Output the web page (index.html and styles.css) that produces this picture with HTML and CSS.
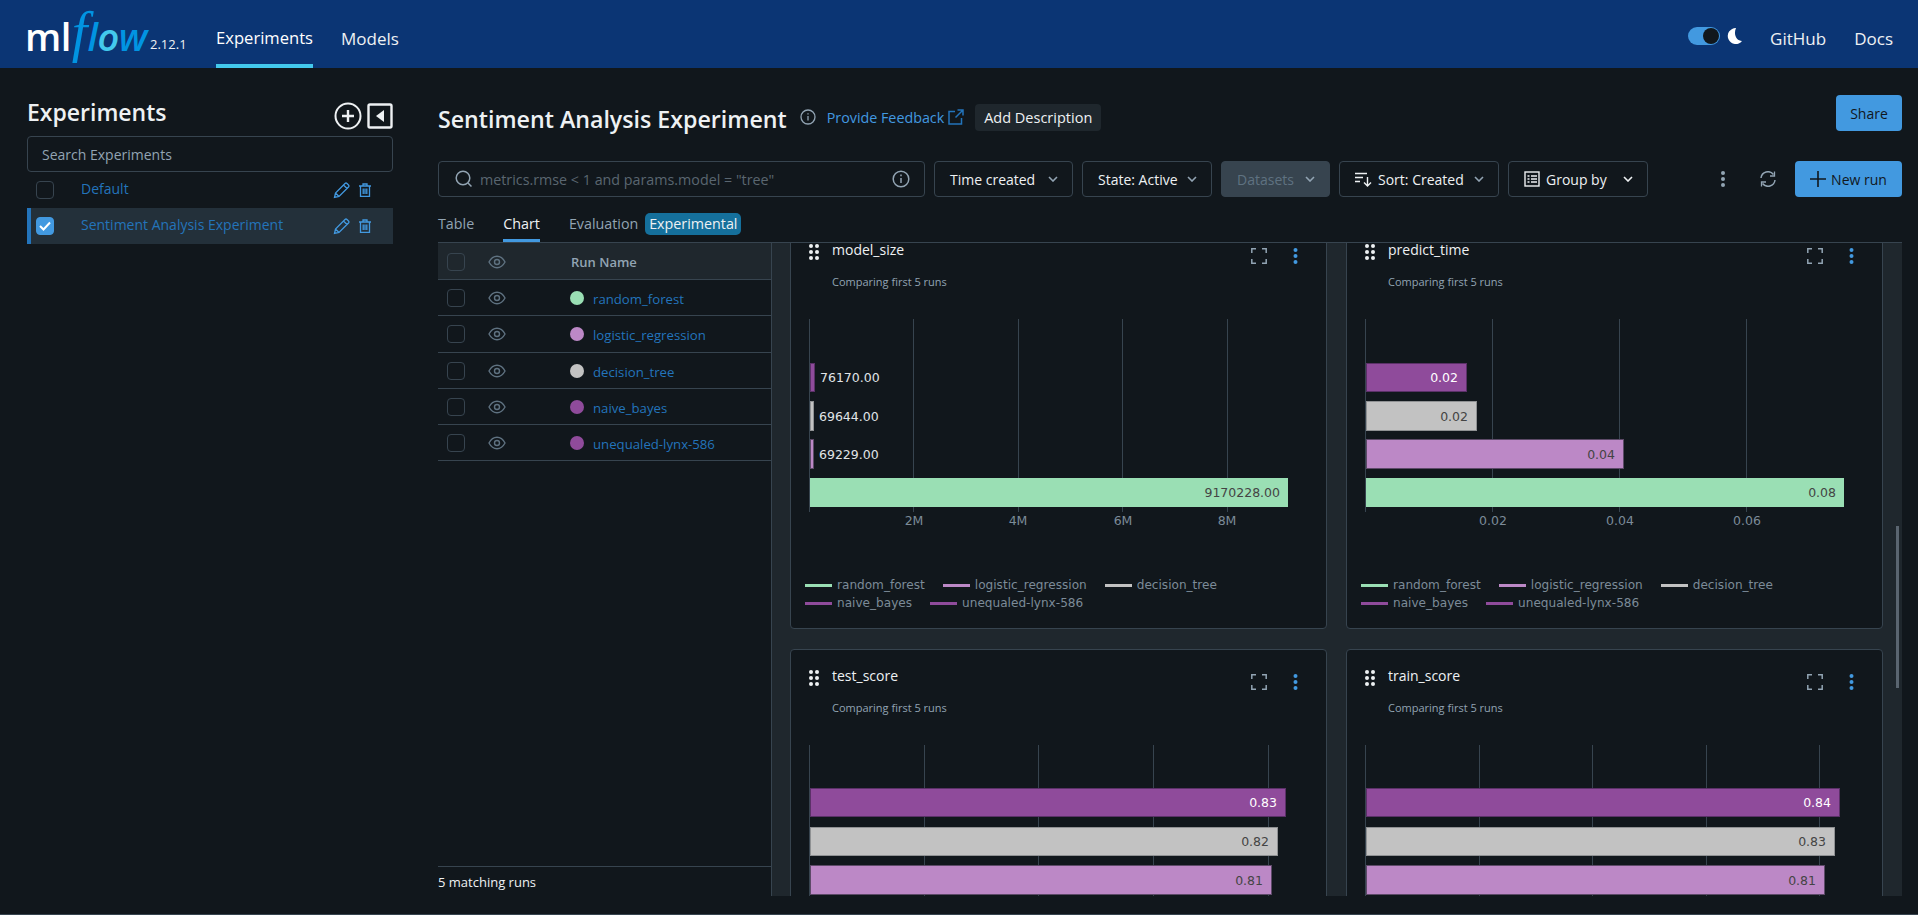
FILE: index.html
```html
<!DOCTYPE html>
<html lang="en">
  <head>
    <meta charset="UTF-8" />
    <title>MLflow Experiments</title>
    <link rel="stylesheet" href="styles.css">
  </head>
  <body>
    <header class="topbar">
      <div class="logo"><span class="logo-ml">ml</span><span class="logo-f">f</span><span class="logo-low">l<span class="logo-o">o</span>w</span></div>
      <span class="version">2.12.1</span>
      <nav class="nav">
        <a class="nav-link active">Experiments</a>
        <a class="nav-link">Models</a>
      </nav>
      <div class="topbar-right">
        <span class="toggle"><span class="knob"></span></span>
        <svg class="moon" width="16" height="18" viewBox="0 0 16 18"><path d="M9 1A8 8 0 1 0 15 14C10 14 6 8 9 1z" fill="#fff"/></svg>
        <a class="nav-link github">GitHub</a>
        <a class="nav-link">Docs</a>
      </div>
    </header>

    <div class="content">
      <aside class="sidebar">
        <div class="side-head">
          <h2>Experiments</h2>
          <svg class="side-add" width="28" height="28" viewBox="0 0 28 28" fill="none" stroke="#eef1f3" stroke-width="2"><circle cx="14" cy="14" r="12.5"/><path d="M14 8v12M8 14h12" stroke-width="2.4"/></svg>
          <svg class="side-collapse" width="26" height="26" viewBox="0 0 26 26"><rect x="1.5" y="1.5" width="23" height="23" rx="1.5" fill="none" stroke="#eef1f3" stroke-width="2.4"/><path d="M17 7v12l-8-6z" fill="#eef1f3"/></svg>
        </div>
        <div class="side-search">Search Experiments</div>
        <div class="side-row">
          <span class="check"></span>
          <a class="side-name">Default</a>
          <svg class="pencil" width="17" height="17" viewBox="0 0 17 17" fill="none" stroke="#4299e0" stroke-width="1.3"><path d="M1.5 15.5l1-4.5L12 1.5a1.5 1.5 0 0 1 2 0l1.5 1.500a1.500 1.500 0 0 1 0 2L6 14.500zM2.500 11l3.500 3.500M10.500 3l3.500 3.500"/></svg>
          <svg class="trash" width="12" height="14" viewBox="0 0 12 14" fill="none" stroke="#4299e0" stroke-width="1.300"><path d="M0 3h12M4 3V1h4v2M1.500 3v10.300h9V3M4.200 5.500v5.500M6 5.500v5.500M7.800 5.500v5.500"/></svg>
        </div>
        <div class="side-row selected">
          <span class="check on"><svg width="12" height="10" viewBox="0 0 12 10" fill="none" stroke="#fff" stroke-width="2"><path d="M1 5l3.500 3.500L11 1.500"/></svg></span>
          <a class="side-name">Sentiment Analysis Experiment</a>
          <svg class="pencil" width="17" height="17" viewBox="0 0 17 17" fill="none" stroke="#4299e0" stroke-width="1.3"><path d="M1.5 15.5l1-4.5L12 1.5a1.5 1.5 0 0 1 2 0l1.5 1.500a1.500 1.500 0 0 1 0 2L6 14.500zM2.500 11l3.500 3.500M10.500 3l3.500 3.500"/></svg>
          <svg class="trash" width="12" height="14" viewBox="0 0 12 14" fill="none" stroke="#4299e0" stroke-width="1.300"><path d="M0 3h12M4 3V1h4v2M1.500 3v10.300h9V3M4.200 5.500v5.500M6 5.500v5.500M7.800 5.500v5.500"/></svg>
        </div>
      </aside>

      <main class="main">
        <div class="title-row">
          <h1>Sentiment Analysis Experiment</h1>
          <svg class="title-info" width="16" height="16" viewBox="0 0 16 16" fill="none" stroke="#92a4b3" stroke-width="1.300"><circle cx="8" cy="8" r="7"/><path d="M8 7v4.500M8 4.200v1.300"/></svg>
          <a class="feedback">Provide Feedback</a>
          <svg class="ext" width="16" height="16" viewBox="0 0 16 16" fill="none" stroke="#2374bb" stroke-width="1.500"><path d="M7 2.500H1v12.500h12.500V9M9.500 1H15v5.500M15 1L7.500 8.500"/></svg>
          <button class="btn-desc">Add Description</button>
          <button class="btn-share">Share</button>
        </div>

        <div class="filters">
          <div class="search-box">
            <svg width="18" height="18" viewBox="0 0 18 18" fill="none" stroke="#92a4b3" stroke-width="1.500"><circle cx="8" cy="8" r="6.800"/><path d="M13 13l3.500 3.500"/></svg>
            <span class="placeholder">metrics.rmse &lt; 1 and params.model = "tree"</span>
            <svg class="search-info" width="18" height="18" viewBox="0 0 18 18" fill="none" stroke="#92a4b3" stroke-width="1.500"><circle cx="9" cy="9" r="7.800"/><path d="M9 8v5M9 4.600v1.600"/></svg>
          </div>
          <button class="select w-time">Time created<svg class="chev" width="10" height="6" viewBox="0 0 10 6" fill="none" stroke="#92a4b3" stroke-width="1.600"><path d="M1 1l4 4 4-4"/></svg></button>
          <button class="select w-state">State: Active<svg class="chev" width="10" height="6" viewBox="0 0 10 6" fill="none" stroke="#92a4b3" stroke-width="1.600"><path d="M1 1l4 4 4-4"/></svg></button>
          <button class="select w-data disabled">Datasets<svg class="chev" width="10" height="6" viewBox="0 0 10 6" fill="none" stroke="#92a4b3" stroke-width="1.600"><path d="M1 1l4 4 4-4"/></svg></button>
          <button class="select w-sort"><svg class="lead" width="17" height="15" viewBox="0 0 17 15" fill="none" stroke="#eef1f3" stroke-width="1.400"><path d="M0 1.500h12M0 5.500h8M0 9.500h5M12.500 5v9M9 10.500l3.500 3.500 3.500-3.500"/></svg>Sort: Created<svg class="chev" width="10" height="6" viewBox="0 0 10 6" fill="none" stroke="#92a4b3" stroke-width="1.600"><path d="M1 1l4 4 4-4"/></svg></button>
          <button class="select w-group"><svg class="lead" width="16" height="16" viewBox="0 0 16 16" fill="none" stroke="#eef1f3" stroke-width="1.400"><rect x="1" y="1" width="14" height="14"/><path d="M3.500 5h2M7 5h6M3.500 8h2M7 8h6M3.500 11h2M7 11h6"/></svg>Group by<svg class="chev" width="10" height="6" viewBox="0 0 10 6" fill="none" stroke="#eef1f3" stroke-width="1.600"><path d="M1 1l4 4 4-4"/></svg></button>
          <svg class="more" width="6" height="16" viewBox="0 0 6 16" fill="#92a4b3"><circle cx="3" cy="2" r="2"/><circle cx="3" cy="8" r="2"/><circle cx="3" cy="14" r="2"/></svg>
          <svg class="refresh" width="16" height="16" viewBox="0 0 16 16" fill="none" stroke="#92a4b3" stroke-width="1.500"><path d="M1 7a7 7 0 0 1 12.500-3.500M15 9a7 7 0 0 1-12.500 3.500"/><path d="M14.500 0.500V5H10M1.500 15.500V11H6" stroke-width="1.300"/></svg>
          <button class="btn-new"><svg width="16" height="16" viewBox="0 0 16 16" fill="none" stroke="#11171c" stroke-width="1.600"><path d="M8 0v16M0 8h16"/></svg>New run</button>
        </div>

        <div class="tabs">
          <a class="tab">Table</a>
          <a class="tab active">Chart</a>
          <a class="tab">Evaluation</a>
          <span class="badge">Experimental</span>
        </div>

        <div class="workspace">
          <section class="runs">
            <div class="run-row run-head">
              <span class="check dim"></span>
              <svg class="eye" width="18" height="14" viewBox="0 0 18 14" fill="none" stroke="#5f7281" stroke-width="1.400"><path d="M1 7c2-3.800 4.800-5.700 8-5.700S15 3.200 17 7c-2 3.800-4.800 5.700-8 5.700S3 10.800 1 7z"/><circle cx="9" cy="7" r="2.500"/></svg>
              <span class="run-title">Run Name</span>
            </div>
            <div class="run-row">
              <span class="check dim"></span>
              <svg class="eye" width="18" height="14" viewBox="0 0 18 14" fill="none" stroke="#5f7281" stroke-width="1.400"><path d="M1 7c2-3.800 4.800-5.700 8-5.700S15 3.200 17 7c-2 3.800-4.800 5.700-8 5.700S3 10.800 1 7z"/><circle cx="9" cy="7" r="2.500"/></svg>
              <span class="dot green"></span><a class="run-name">random_forest</a>
            </div>
            <div class="run-row">
              <span class="check dim"></span>
              <svg class="eye" width="18" height="14" viewBox="0 0 18 14" fill="none" stroke="#5f7281" stroke-width="1.400"><path d="M1 7c2-3.800 4.800-5.700 8-5.700S15 3.200 17 7c-2 3.800-4.800 5.700-8 5.700S3 10.800 1 7z"/><circle cx="9" cy="7" r="2.500"/></svg>
              <span class="dot violet"></span><a class="run-name">logistic_regression</a>
            </div>
            <div class="run-row">
              <span class="check dim"></span>
              <svg class="eye" width="18" height="14" viewBox="0 0 18 14" fill="none" stroke="#5f7281" stroke-width="1.400"><path d="M1 7c2-3.800 4.800-5.700 8-5.700S15 3.200 17 7c-2 3.800-4.800 5.700-8 5.700S3 10.800 1 7z"/><circle cx="9" cy="7" r="2.500"/></svg>
              <span class="dot grey"></span><a class="run-name">decision_tree</a>
            </div>
            <div class="run-row">
              <span class="check dim"></span>
              <svg class="eye" width="18" height="14" viewBox="0 0 18 14" fill="none" stroke="#5f7281" stroke-width="1.400"><path d="M1 7c2-3.800 4.800-5.700 8-5.700S15 3.200 17 7c-2 3.800-4.800 5.700-8 5.700S3 10.800 1 7z"/><circle cx="9" cy="7" r="2.500"/></svg>
              <span class="dot purple"></span><a class="run-name">naive_bayes</a>
            </div>
            <div class="run-row">
              <span class="check dim"></span>
              <svg class="eye" width="18" height="14" viewBox="0 0 18 14" fill="none" stroke="#5f7281" stroke-width="1.400"><path d="M1 7c2-3.800 4.800-5.700 8-5.700S15 3.200 17 7c-2 3.800-4.800 5.700-8 5.700S3 10.800 1 7z"/><circle cx="9" cy="7" r="2.500"/></svg>
              <span class="dot purple"></span><a class="run-name">unequaled-lynx-586</a>
            </div>
            <div class="runs-foot">5 matching runs</div>
          </section>

          <section class="charts">
            <div class="chart-grid">

              <article class="card">
                <div class="card-head">
                  <svg class="grip" width="10" height="16" viewBox="0 0 10 16" fill="#eef1f3"><circle cx="2" cy="2" r="2"/><circle cx="8" cy="2" r="2"/><circle cx="2" cy="8" r="2"/><circle cx="8" cy="8" r="2"/><circle cx="2" cy="14" r="2"/><circle cx="8" cy="14" r="2"/></svg>
                  <h3>model_size</h3>
                  <svg class="fullscreen" width="16" height="16" viewBox="0 0 16 16" fill="none" stroke="#92a4b3" stroke-width="1.500"><path d="M5 .8H.8V5M11 .8h4.200V5M5 15.200H.8V11M11 15.200h4.200V11"/></svg>
                  <svg class="kebab" width="5" height="16" viewBox="0 0 5 16" fill="#4299e0"><circle cx="2.500" cy="2" r="2"/><circle cx="2.500" cy="8" r="2"/><circle cx="2.500" cy="14" r="2"/></svg>
                </div>
                <p class="card-sub">Comparing first 5 runs</p>
                <svg class="plot" width="535" height="212" viewBox="1 0 535 212">
                  <path class="gridline" d="M19.500 0v193M123.500 0v193M228.500 0v193M332.500 0v193M437.500 0v193"/>
                  <rect class="bar purple-bar" x="20.500" y="44.500" width="4" height="28"/>
                  <rect class="bar grey-bar" x="20.500" y="82.500" width="3" height="29"/>
                  <rect class="bar violet-bar" x="20.500" y="120.500" width="3" height="29"/>
                  <rect class="bar green-bar" x="20" y="159" width="478" height="29"/>
                  <text class="bar-out" x="30" y="63">76170.00</text>
                  <text class="bar-out" x="29" y="102">69644.00</text>
                  <text class="bar-out" x="29" y="140">69229.00</text>
                  <text class="bar-in" x="490" y="178">9170228.00</text>
                  <text class="tick" x="124" y="206">2M</text>
                  <text class="tick" x="228" y="206">4M</text>
                  <text class="tick" x="333" y="206">6M</text>
                  <text class="tick" x="437" y="206">8M</text>
                </svg>
                <div class="legend">
                  <span class="key"><i class="swatch green"></i>random_forest</span>
                  <span class="key"><i class="swatch violet"></i>logistic_regression</span>
                  <span class="key"><i class="swatch grey"></i>decision_tree</span>
                  <span class="key"><i class="swatch purple"></i>naive_bayes</span>
                  <span class="key"><i class="swatch purple"></i>unequaled-lynx-586</span>
                </div>
              </article>

              <article class="card">
                <div class="card-head">
                  <svg class="grip" width="10" height="16" viewBox="0 0 10 16" fill="#eef1f3"><circle cx="2" cy="2" r="2"/><circle cx="8" cy="2" r="2"/><circle cx="2" cy="8" r="2"/><circle cx="8" cy="8" r="2"/><circle cx="2" cy="14" r="2"/><circle cx="8" cy="14" r="2"/></svg>
                  <h3>predict_time</h3>
                  <svg class="fullscreen" width="16" height="16" viewBox="0 0 16 16" fill="none" stroke="#92a4b3" stroke-width="1.500"><path d="M5 .8H.8V5M11 .8h4.200V5M5 15.200H.8V11M11 15.200h4.200V11"/></svg>
                  <svg class="kebab" width="5" height="16" viewBox="0 0 5 16" fill="#4299e0"><circle cx="2.500" cy="2" r="2"/><circle cx="2.500" cy="8" r="2"/><circle cx="2.500" cy="14" r="2"/></svg>
                </div>
                <p class="card-sub">Comparing first 5 runs</p>
                <svg class="plot" width="535" height="212" viewBox="1 0 535 212">
                  <path class="gridline" d="M19.500 0v193M146.500 0v193M273.500 0v193M400.500 0v193"/>
                  <rect class="bar purple-bar" x="20.500" y="44.500" width="100" height="28"/>
                  <rect class="bar grey-bar" x="20.500" y="82.500" width="110" height="29"/>
                  <rect class="bar violet-bar" x="20.500" y="120.500" width="257" height="29"/>
                  <rect class="bar green-bar" x="20" y="159" width="478" height="29"/>
                  <text class="bar-in light" x="112" y="63">0.02</text>
                  <text class="bar-in" x="122" y="102">0.02</text>
                  <text class="bar-in" x="269" y="140">0.04</text>
                  <text class="bar-in" x="490" y="178">0.08</text>
                  <text class="tick" x="147" y="206">0.02</text>
                  <text class="tick" x="274" y="206">0.04</text>
                  <text class="tick" x="401" y="206">0.06</text>
                </svg>
                <div class="legend">
                  <span class="key"><i class="swatch green"></i>random_forest</span>
                  <span class="key"><i class="swatch violet"></i>logistic_regression</span>
                  <span class="key"><i class="swatch grey"></i>decision_tree</span>
                  <span class="key"><i class="swatch purple"></i>naive_bayes</span>
                  <span class="key"><i class="swatch purple"></i>unequaled-lynx-586</span>
                </div>
              </article>

              <article class="card">
                <div class="card-head">
                  <svg class="grip" width="10" height="16" viewBox="0 0 10 16" fill="#eef1f3"><circle cx="2" cy="2" r="2"/><circle cx="8" cy="2" r="2"/><circle cx="2" cy="8" r="2"/><circle cx="8" cy="8" r="2"/><circle cx="2" cy="14" r="2"/><circle cx="8" cy="14" r="2"/></svg>
                  <h3>test_score</h3>
                  <svg class="fullscreen" width="16" height="16" viewBox="0 0 16 16" fill="none" stroke="#92a4b3" stroke-width="1.500"><path d="M5 .8H.8V5M11 .8h4.200V5M5 15.200H.8V11M11 15.200h4.200V11"/></svg>
                  <svg class="kebab" width="5" height="16" viewBox="0 0 5 16" fill="#4299e0"><circle cx="2.500" cy="2" r="2"/><circle cx="2.500" cy="8" r="2"/><circle cx="2.500" cy="14" r="2"/></svg>
                </div>
                <p class="card-sub">Comparing first 5 runs</p>
                <svg class="plot" width="535" height="212" viewBox="1 0 535 212">
                  <path class="gridline" d="M19.500 0v193M134.500 0v193M248.500 0v193M363.500 0v193M478.500 0v193"/>
                  <rect class="bar purple-bar" x="20.500" y="43.500" width="475" height="28"/>
                  <rect class="bar grey-bar" x="20.500" y="82.500" width="467" height="28"/>
                  <rect class="bar violet-bar" x="20.500" y="120.500" width="461" height="29"/>
                  <text class="bar-in light" x="487" y="62">0.83</text>
                  <text class="bar-in" x="479" y="101">0.82</text>
                  <text class="bar-in" x="473" y="140">0.81</text>
                </svg>
              </article>

              <article class="card">
                <div class="card-head">
                  <svg class="grip" width="10" height="16" viewBox="0 0 10 16" fill="#eef1f3"><circle cx="2" cy="2" r="2"/><circle cx="8" cy="2" r="2"/><circle cx="2" cy="8" r="2"/><circle cx="8" cy="8" r="2"/><circle cx="2" cy="14" r="2"/><circle cx="8" cy="14" r="2"/></svg>
                  <h3>train_score</h3>
                  <svg class="fullscreen" width="16" height="16" viewBox="0 0 16 16" fill="none" stroke="#92a4b3" stroke-width="1.500"><path d="M5 .8H.8V5M11 .8h4.200V5M5 15.200H.8V11M11 15.200h4.200V11"/></svg>
                  <svg class="kebab" width="5" height="16" viewBox="0 0 5 16" fill="#4299e0"><circle cx="2.500" cy="2" r="2"/><circle cx="2.500" cy="8" r="2"/><circle cx="2.500" cy="14" r="2"/></svg>
                </div>
                <p class="card-sub">Comparing first 5 runs</p>
                <svg class="plot" width="535" height="212" viewBox="1 0 535 212">
                  <path class="gridline" d="M19.500 0v193M133.500 0v193M246.500 0v193M360.500 0v193M473.500 0v193"/>
                  <rect class="bar purple-bar" x="20.500" y="43.500" width="473" height="28"/>
                  <rect class="bar grey-bar" x="20.500" y="82.500" width="468" height="28"/>
                  <rect class="bar violet-bar" x="20.500" y="120.500" width="458" height="29"/>
                  <text class="bar-in light" x="485" y="62">0.84</text>
                  <text class="bar-in" x="480" y="101">0.83</text>
                  <text class="bar-in" x="470" y="140">0.81</text>
                </svg>
              </article>

            </div>
            <span class="scroll-thumb"></span>
          </section>
        </div>
      </main>
    </div>
  </body>
</html>
```

FILE: styles.css
```css
* {
  box-sizing: border-box;
}

body {
  margin: 0;
  height: 915px;
  overflow: hidden;
  display: flex;
  flex-direction: column;
  background: #11171c;
  color: #eef1f3;
  font-family: "Open Sans", sans-serif;
  font-size: 14px;
  border-bottom: 1px solid #37444f;
}

h1,
h2,
h3,
p {
  margin: 0;
}

button {
  font-family: inherit;
  font-size: 14px;
  cursor: pointer;
}

/* top bar */
.topbar {
  height: 68px;
  flex: none;
  background: #0b3574;
  display: flex;
  align-items: center;
  padding: 0 25px 0 27px;
}

.logo {
  width: 123px;
  height: 50px;
  margin-top: -4px;
  display: flex;
  align-items: baseline;
  line-height: 50px;
  font-size: 38px;
  font-weight: 600;
  white-space: nowrap;
}

.logo-ml {
  margin-left: -2px;
  color: #fff;
  letter-spacing: -0.5px;
}

.logo-f {
  font-family: "Liberation Serif", serif;
  font-style: italic;
  font-size: 56px;
  font-weight: 400;
  color: #0194e2;
  margin: 0 0 0 1px;
}

.logo-low {
  font-style: italic;
  color: #0194e2;
  letter-spacing: -0.5px;
}

.logo-o {
  color: #43c9ed;
}

.version {
  align-self: flex-end;
  margin-bottom: 15px;
  width: 66px;
  font-size: 13px;
  color: #eef1f3;
}

.nav {
  height: 100%;
  display: flex;
  gap: 28px;
}

.nav-link {
  height: 68px;
  display: flex;
  align-items: center;
  padding-top: 8px;
  font-size: 17px;
  color: #eef1f3;
}

.nav-link.active {
  padding-top: 10px;
  font-size: 16.6px;
  border-bottom: 4px solid #43c9ed;
  color: #fff;
}

.topbar-right {
  margin-left: auto;
  display: flex;
  align-items: center;
  gap: 28px;
}

.toggle {
  width: 32px;
  height: 18px;
  margin-top: 4px;
  border-radius: 9px;
  background: #4299e0;
  display: flex;
  justify-content: flex-end;
  padding: 1px;
}

.knob {
  width: 16px;
  height: 16px;
  border-radius: 50%;
  background: #11171c;
}

.moon {
  margin-left: -21px;
  margin-top: 3px;
}

.github {
  margin-left: -1px;
}

/* layout */
.content {
  flex: 1;
  min-height: 0;
  display: flex;
}

/* experiments list */
.sidebar {
  width: 438px;
  flex: none;
  padding: 28px 45px 0 27px;
}

.side-head {
  height: 40px;
  display: flex;
  align-items: center;
  gap: 5px;
}

.side-head h2 {
  font-size: 23px;
  line-height: 30px;
  margin-top: -8px;
  font-weight: 600;
  margin-right: auto;
}

.side-search {
  height: 36px;
  display: flex;
  align-items: center;
  padding-left: 14px;
  border: 1px solid #37444f;
  border-radius: 4px;
  color: #92a4b3;
}

.side-row {
  height: 36px;
  display: flex;
  align-items: center;
  padding-left: 5px;
  border-left: 4px solid transparent;
  padding-right: 22px;
}

.side-row.selected {
  background: #23303a;
  border-left-color: #2374bb;
}

.check {
  width: 18px;
  height: 18px;
  flex: none;
  border: 1px solid #37444f;
  border-radius: 4px;
  display: flex;
  align-items: center;
  justify-content: center;
}

.check.on {
  background: #4299e0;
  border-color: #4299e0;
}

.side-name {
  margin-left: 27px;
  margin-right: auto;
  margin-bottom: 3px;
  color: #2374bb;
}

.pencil {
  margin-right: 9px;
}

/* title row */
.main {
  flex: 1;
  min-width: 0;
  display: flex;
  flex-direction: column;
  padding: 27px 16px 18px 0;
}

.title-row {
  height: 36px;
  flex: none;
  display: flex;
  align-items: flex-end;
}

.title-row h1 {
  font-size: 23.2px;
  line-height: 24px;
  font-weight: 600;
}

.title-info {
  margin: 0 11px 6px 13px;
}

.feedback {
  line-height: 27px;
  font-size: 14.3px;
  color: #4299e0;
}

.ext {
  margin: 0 11px 6px 4px;
}

.btn-desc {
  height: 27px;
  width: 126px;
  padding: 0;
  border: 0;
  border-radius: 4px;
  background: #1f272d;
  color: #eef1f3;
  font-size: 14.5px;
}

.btn-share {
  margin-left: auto;
  width: 66px;
  height: 36px;
  padding: 0;
  border: 0;
  border-radius: 4px;
  background: #4299e0;
  color: #11171c;
}

/* filter row */
.filters {
  height: 36px;
  flex: none;
  margin-top: 30px;
  display: flex;
  align-items: center;
  gap: 9px;
}

.filters > * {
  flex: none;
}

.search-box {
  width: 487px;
  height: 36px;
  display: flex;
  align-items: center;
  padding: 0 14px 0 16px;
  border: 1px solid #37444f;
  border-radius: 4px;
}

.placeholder {
  margin-left: 7px;
  font-size: 14.3px;
  color: #5a6670;
}

.search-info {
  margin-left: auto;
}

.select {
  height: 36px;
  display: flex;
  align-items: center;
  padding: 0 14px 0 15px;
  background: transparent;
  border: 1px solid #37444f;
  border-radius: 4px;
  color: #eef1f3;
  white-space: nowrap;
}

.select.disabled {
  background: #37444f;
  border-color: #37444f;
  color: #5f7281;
}

.chev {
  margin-left: auto;
}

.w-time { width: 139px; }
.w-state { width: 130px; }
.w-data { width: 109px; }
.w-sort { width: 160px; }
.w-group { width: 140px; }

.lead {
  margin-right: 6px;
}

.more {
  margin-left: 63px;
}

.refresh {
  margin-left: 25px;
}

.btn-new {
  width: 107px;
  height: 36px;
  margin-left: 10px;
  display: flex;
  align-items: center;
  justify-content: center;
  gap: 5px;
  padding: 0;
  border: 0;
  border-radius: 4px;
  background: #4299e0;
  color: #11171c;
}

/* tabs */
.tabs {
  height: 46px;
  flex: none;
  display: flex;
  align-items: stretch;
  font-size: 14.3px;
  border-bottom: 1px solid #37444f;
}

.tab {
  display: flex;
  align-items: center;
  padding-top: 10px;
  margin-right: 29px;
  color: #92a4b3;
  border-bottom: 3px solid transparent;
}

.tab:nth-child(3) {
  margin-right: 7px;
}

.tab.active {
  color: #eef1f3;
  border-bottom-color: #4299e0;
}

.badge {
  align-self: flex-start;
  width: 96px;
  margin-top: 16px;
  height: 22px;
  line-height: 21px;
  text-align: center;
  border-radius: 5px;
  background: #15709c;
  color: #eef1f3;
}

/* runs table */
.workspace {
  flex: 1;
  min-height: 0;
  display: flex;
}

.runs {
  width: 333px;
  flex: none;
  display: flex;
  flex-direction: column;
}

.run-row {
  height: 36.2px;
  flex: none;
  display: flex;
  align-items: center;
  padding-left: 9px;
  padding-top: 1px;
  border-bottom: 1px solid #37444f;
}

.run-head {
  height: 37.2px;
  background: #1f272d;
}

.check.dim {
  border-color: #37444f;
}

.eye {
  margin-left: 23px;
}

.run-title {
  margin-left: 65px;
  font-size: 13px;
  font-weight: 600;
  color: #92a4b3;
}

.dot {
  width: 14px;
  height: 14px;
  margin-left: 64px;
  border-radius: 50%;
}

.run-name {
  margin-left: 9px;
  margin-top: 2px;
  font-size: 13.2px;
  color: #2374bb;
}

.green { background: #9adfb4; }
.violet { background: #bc88c6; }
.grey { background: #c2c2c2; }
.purple { background: #8f4b9b; }

.runs-foot {
  margin-top: auto;
  height: 30px;
  display: flex;
  align-items: center;
  border-top: 1px solid #37444f;
  font-size: 13px;
}

/* chart pane */
.charts {
  flex: 1;
  min-width: 0;
  position: relative;
  overflow: hidden;
  padding-left: 18px;
  background: #1f272d;
  border-left: 1px solid #37444f;
}

.chart-grid {
  margin-top: -20px;
  display: grid;
  grid-template-columns: 537px 537px;
  grid-auto-rows: 406px;
  column-gap: 19px;
  row-gap: 20px;
}

.card {
  background: #11171c;
  border: 1px solid #37444f;
  border-radius: 4px;
}

.card-head {
  height: 40px;
  display: flex;
  align-items: flex-start;
  padding: 14px 0 0 18px;
}

.card-head h3 {
  margin: 5px 0 0 13px;
  font-size: 14px;
  line-height: 14px;
  font-weight: 400;
}

.grip {
  margin-top: 6px;
}

.fullscreen {
  margin-left: auto;
  margin-top: 10px;
}

.kebab {
  margin: 10px 28px 0 26px;
}

.card-sub {
  height: 55px;
  padding: 8px 0 0 41px;
  font-size: 11px;
  line-height: 20px;
  color: #92a4b3;
}

.plot {
  display: block;
}

.gridline {
  fill: none;
  stroke: #37444f;
  stroke-width: 1;
}

.bar {
  stroke-width: 1;
}

.green-bar { fill: #9adfb4; }
.violet-bar { fill: #bc88c6; stroke: #5d4a68; }
.grey-bar { fill: #c2c2c2; stroke: #8f9193; }
.purple-bar { fill: #8f4b9b; stroke: #5b3168; }

.bar-in,
.bar-out,
.tick {
  font-family: "DejaVu Sans", sans-serif;
  font-size: 12.5px;
}

.bar-in {
  fill: #444;
  text-anchor: end;
}

.bar-in.light {
  fill: #fff;
}

.bar-out {
  fill: #e0e4e7;
}

.tick {
  fill: #7c8b98;
  text-anchor: middle;
}

.legend {
  display: flex;
  flex-wrap: wrap;
  width: 480px;
  margin-top: 45px;
  padding-left: 14px;
  column-gap: 18px;
  font-family: "DejaVu Sans", sans-serif;
  font-size: 12.1px;
  line-height: 18px;
  color: #7c8b98;
}

.key {
  display: flex;
  align-items: center;
}

.swatch {
  width: 27px;
  height: 3px;
  margin-right: 5px;
}

.scroll-thumb {
  position: absolute;
  right: 3px;
  top: 283px;
  width: 3px;
  height: 162px;
  background: #5a6570;
}
```
